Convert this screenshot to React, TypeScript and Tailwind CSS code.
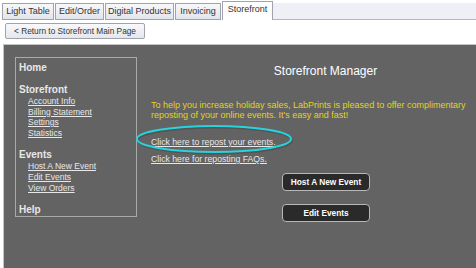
import React from 'react';

const tabs = [
  { label: 'Light Table', w: 'w-[52px]' },
  { label: 'Edit/Order', w: 'w-[49px]' },
  { label: 'Digital Products', w: 'w-[69px]' },
  { label: 'Invoicing', w: 'w-[46px]' },
];

export default function App() {
  return (
    <div className="relative flex h-[268px] w-[476px] flex-col overflow-hidden bg-white font-['Liberation_Sans',Arial,sans-serif]">
      {/* tab strip */}
      <div className="flex h-[20px] items-end pl-[2px]">
        {tabs.map((t) => (
          <div
            key={t.label}
            className={`${t.w} mr-[1px] flex h-[17px] items-center justify-center border border-[#9ea3ad] bg-gradient-to-b from-[#f7f8fa] to-[#e2e5eb] text-[9px] text-[#333]`}
          >
            {t.label}
          </div>
        ))}
        <div className="flex h-[19px] w-[51px] items-center justify-center border border-b-0 border-[#9ea3ad] bg-white pb-[2px] text-[9px] text-[#333]">
          Storefront
        </div>
        <div className="h-[17px] flex-1 border-b border-[#b5b8c0] bg-[#eff0f5]" />
      </div>

      <div className="pl-[5px] pt-[3px]">
        <button className="flex h-[16px] w-[140px] items-center justify-start whitespace-nowrap rounded-[2px] border border-[#9ea3ad] bg-gradient-to-b from-[#f8f9fb] to-[#e4e7ec] pl-[8px] text-[8.3px] text-[#333]">
          &lt; Return to Storefront Main Page
        </button>
      </div>

      {/* dark panel */}
      <div className="ml-[3px] mt-[5px] flex flex-1 border-l border-t border-[#c4c4c4] bg-[#636363]">
        <nav className="ml-[11px] mt-[12px] h-[160px] w-[122px] border border-[#a9a9a9] pl-[3px] pt-[4px] text-[#e8e8e8]">
          <p className="text-[10px] font-bold leading-[12px]">Home</p>
          <p className="mt-[10px] text-[10px] font-bold leading-[12px]">Storefront</p>
          <ul className="pl-[9px] text-[8.5px] leading-[10.6px] underline">
            <li>Account Info</li>
            <li>Billing Statement</li>
            <li>Settings</li>
            <li>Statistics</li>
          </ul>
          <p className="mt-[11px] text-[10px] font-bold leading-[12px]">Events</p>
          <ul className="pl-[9px] text-[8.5px] leading-[10.6px] underline">
            <li>Host A New Event</li>
            <li>Edit Events</li>
            <li>View Orders</li>
          </ul>
          <p className="mt-[11px] text-[10px] font-bold leading-[12px]">Help</p>
        </nav>

        <main className="relative flex-1 pl-[14px]">
          <h1 className="mt-[17px] pl-[24px] text-center text-[12px] text-white">Storefront Manager</h1>
          <p className="mt-[20px] whitespace-nowrap text-[9px] leading-[10px] text-[#e2d41c]">
            To help you increase holiday sales, LabPrints is pleased to offer complimentary
            <br />
            reposting of your online events. It's easy and fast!
          </p>
          <p className="mt-[17px] text-[8.7px] leading-[11px] text-[#e8e8e8] underline">
            Click here to repost your events.
          </p>
          <p className="mt-[6px] text-[8.7px] leading-[11px] text-[#e8e8e8] underline">
            Click here for reposting FAQs.
          </p>
          <svg
            className="absolute left-[-2px] top-[79px]"
            width="160"
            height="32"
            viewBox="0 0 160 32"
          >
            <ellipse cx="79" cy="15" rx="77" ry="13" fill="none" stroke="#3a3a3a" strokeOpacity="0.35" strokeWidth="2" transform="translate(1 1.5)" />
            <ellipse cx="79" cy="15" rx="77" ry="13" fill="none" stroke="#27d3dc" strokeWidth="2" />
          </svg>
          <div className="ml-[131px] mt-[8px] flex w-[88px] flex-col gap-[13px]">
            <button className="h-[18px] rounded-[4px] border border-[#b8b8b8] bg-[#2a2a2a] text-[8.3px] font-bold text-white">
              Host A New Event
            </button>
            <button className="h-[18px] rounded-[4px] border border-[#b8b8b8] bg-[#2a2a2a] text-[8.3px] font-bold text-white">
              Edit Events
            </button>
          </div>
        </main>
      </div>
    </div>
  );
}
